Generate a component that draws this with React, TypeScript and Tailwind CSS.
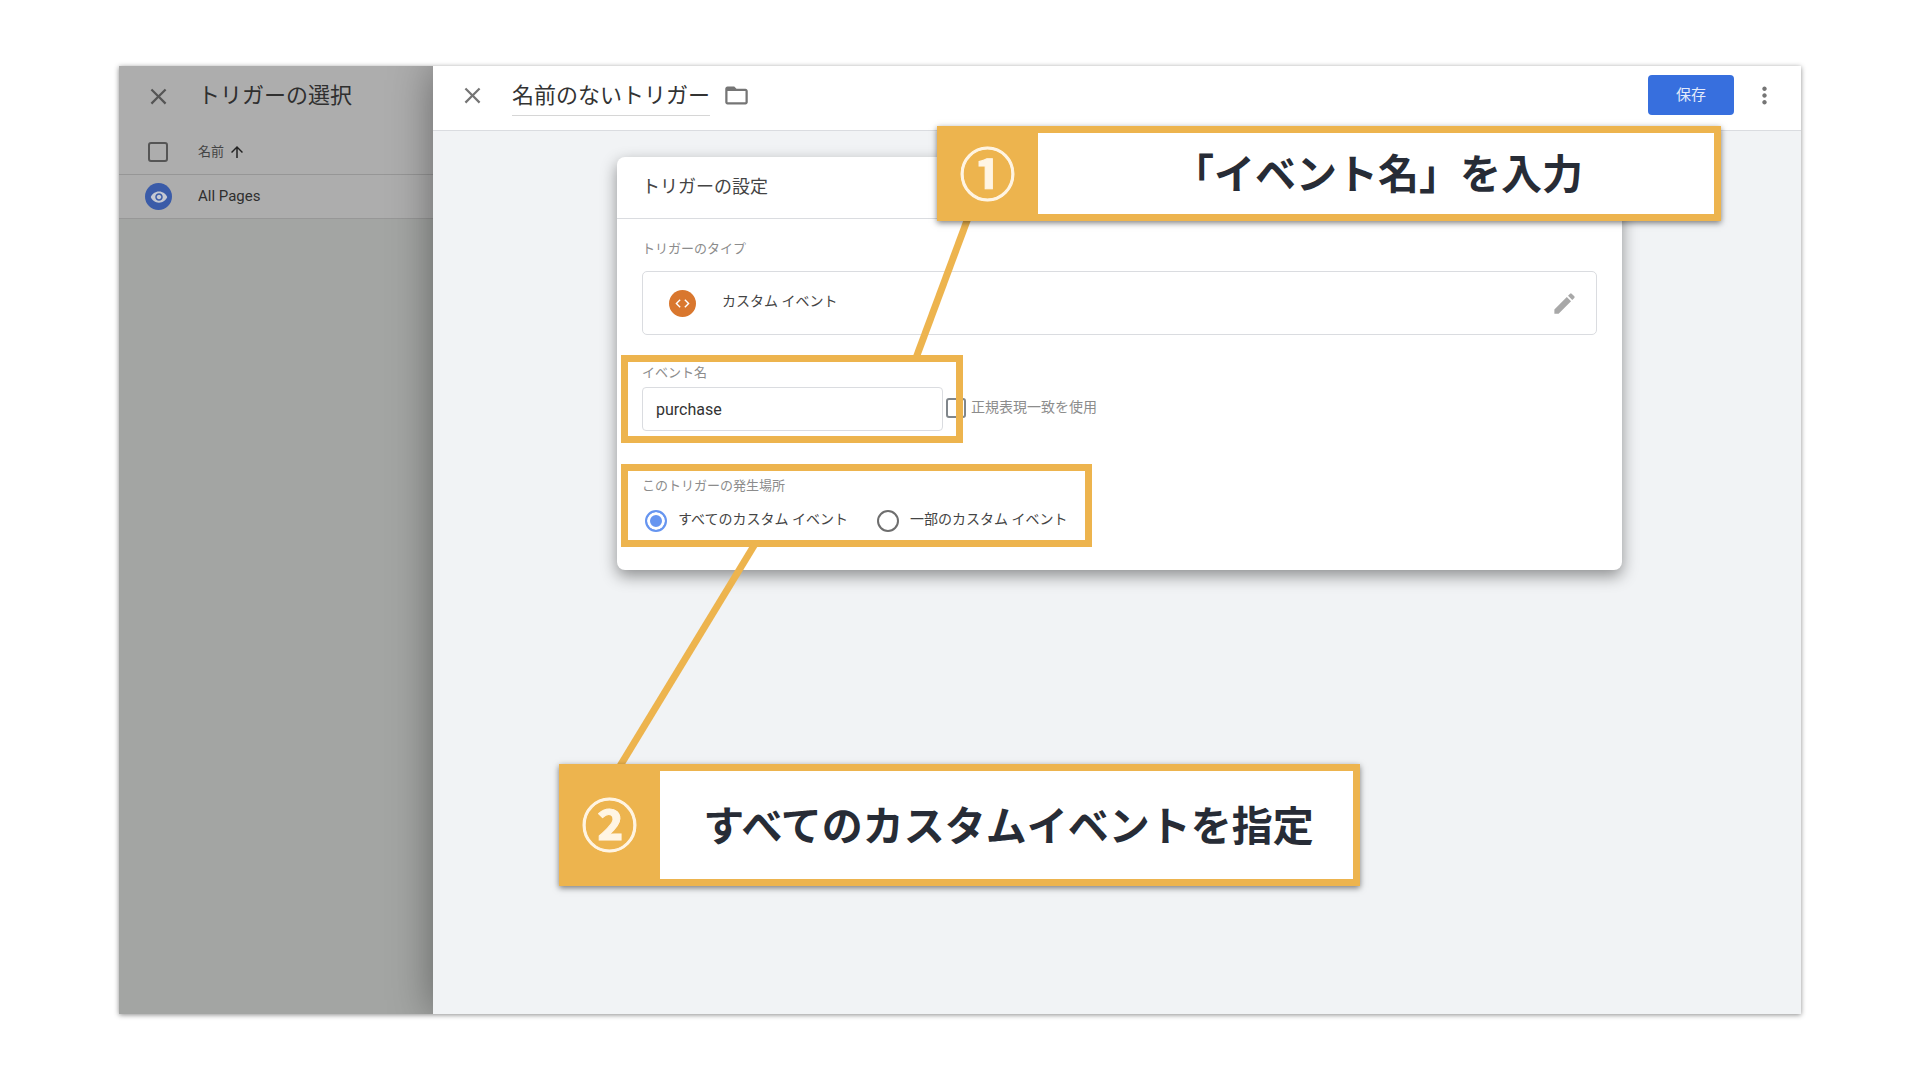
import { useState, type ReactNode } from "react";
import {
  MdArrowUpward,
  MdClose,
  MdCode,
  MdEdit,
  MdFolderOpen,
  MdMoreVert,
  MdVisibility,
} from "react-icons/md";
import { clsx } from "clsx";

const CHECKBOX =
  "size-5 shrink-0 appearance-none rounded-[3px] border-2 checked:bg-[#6695f0]";

function TriggerListPanel() {
  return (
    <aside className="w-[314px] shrink-0 bg-[#a3a5a3] text-[#2f2f2f]">
      <div className="bg-[#adadad]">
        <div className="flex h-16 items-center pb-1 pl-[26px]">
          <button type="button" aria-label="閉じる" className="text-[#555]">
            <MdClose size={27} />
          </button>
          <h2 className="ml-[26px] text-[22px] leading-8">トリガーの選択</h2>
        </div>
        <div className="flex h-[45px] items-center border-b border-[#969696] pl-[29px]">
          <input
            type="checkbox"
            aria-label="すべて選択"
            className={clsx(CHECKBOX, "border-[#555]")}
          />
          <button
            type="button"
            className="ml-[30px] flex items-center gap-1 text-[13px] text-[#444]"
          >
            名前
            <MdArrowUpward size={18} className="text-[#222]" />
          </button>
        </div>
        <div className="flex h-11 items-center border-b border-[#979797] pl-[26px]">
          <span className="flex size-[27px] items-center justify-center rounded-full bg-[#3a5ba8] text-[#c4c8d2]">
            <MdVisibility size={18} />
          </span>
          <a href="#all-pages" className="ml-[26px] text-[15px]">
            All Pages
          </a>
        </div>
      </div>
    </aside>
  );
}

function EditorHeader() {
  const [name, setName] = useState("名前のないトリガー");

  return (
    <header className="flex h-[65px] items-center border-b border-[#dadce0] bg-white pr-[23px] pb-[6px] pl-[26px] text-[#757575]">
      <button type="button" aria-label="閉じる">
        <MdClose size={27} />
      </button>
      <input
        aria-label="トリガー名"
        value={name}
        onChange={(e) => setName(e.target.value)}
        className="ml-[26px] h-[42px] w-[198px] border-b border-[#d6d6d6] pb-1 text-[22px] text-[#333] outline-none"
      />
      <button type="button" aria-label="フォルダ" className="ml-[13px]">
        <MdFolderOpen size={27} />
      </button>
      <button
        type="button"
        className="ml-auto h-10 w-[86px] rounded-[4px] bg-[#376fde] text-[15px] text-[#e3ebfb]"
      >
        保存
      </button>
      <button type="button" aria-label="その他" className="ml-[17px]">
        <MdMoreVert size={27} />
      </button>
    </header>
  );
}

function FieldLabel({ children }: { children: ReactNode }) {
  return <span className="block text-[13px] leading-5 text-[#8c8c8c]">{children}</span>;
}

function FireOption({
  label,
  checked,
  onSelect,
}: {
  label: string;
  checked: boolean;
  onSelect: () => void;
}) {
  return (
    <label className="flex items-center gap-[11px] text-sm leading-5 text-[#444]">
      <input
        type="radio"
        name="fire-on"
        checked={checked}
        onChange={onSelect}
        className="size-[22px] appearance-none rounded-full border-2 border-[#6e6e6e] checked:border-[#6695f0] checked:bg-[#6695f0] checked:shadow-[inset_0_0_0_3px_white]"
      />
      <span className="pb-1">{label}</span>
    </label>
  );
}

function TriggerCard() {
  const [eventName, setEventName] = useState("purchase");
  const [fireOn, setFireOn] = useState("all");

  return (
    <section className="rounded-lg bg-white shadow-[0_6px_16px_rgba(0,0,0,0.42)]">
      <h3 className="flex h-[62px] items-center border-b border-[#dadce0] px-[25px] pb-[2px] text-[18px] text-[#444]">
        トリガーの設定
      </h3>
      <div className="px-[25px] pt-5 pb-[37px]">
        <FieldLabel>トリガーのタイプ</FieldLabel>
        <div className="mt-3 flex h-16 items-center rounded-[5px] border border-[#dadce0] pr-[18px] pl-[26px]">
          <span className="flex size-[27px] items-center justify-center rounded-full bg-[#d9772e] text-white">
            <MdCode size={17} />
          </span>
          <span className="ml-[26px] pb-1 text-sm text-[#444]">カスタム イベント</span>
          <button type="button" aria-label="編集" className="ml-auto text-[#a8a8a8]">
            <MdEdit size={27} />
          </button>
        </div>

        <label htmlFor="event-name" className="mt-7 block">
          <FieldLabel>イベント名</FieldLabel>
        </label>
        <div className="mt-1 flex items-center gap-[3px]">
          <input
            id="event-name"
            value={eventName}
            onChange={(e) => setEventName(e.target.value)}
            className="h-11 w-[301px] rounded-[4px] border border-[#dadce0] px-[13px] text-base text-[#333] outline-none"
          />
          <label className="flex items-center gap-[5px] pb-[2px] text-sm text-[#8c8c8c]">
            <input type="checkbox" className={clsx(CHECKBOX, "border-[#80868b]")} />
            <span className="pb-[2px]">正規表現一致を使用</span>
          </label>
        </div>

        <fieldset className="mt-[45px]">
          <legend>
            <FieldLabel>このトリガーの発生場所</FieldLabel>
          </legend>
          <div className="mt-[13px] flex gap-[29px] pl-[3px]">
            <FireOption
              label="すべてのカスタム イベント"
              checked={fireOn === "all"}
              onSelect={() => setFireOn("all")}
            />
            <FireOption
              label="一部のカスタム イベント"
              checked={fireOn === "some"}
              onSelect={() => setFireOn("some")}
            />
          </div>
        </fieldset>
      </div>
    </section>
  );
}

function Callout({
  mark,
  text,
  className,
}: {
  mark: string;
  text: string;
  className: string;
}) {
  return (
    <div
      className={clsx(
        "absolute flex border-[7px] border-[#edb44e] bg-white shadow-[0_2px_6px_rgba(0,0,0,0.5)]",
        className
      )}
    >
      <span className="flex w-[94px] shrink-0 items-center justify-center bg-[#edb44e] pt-1 pr-[7px] text-[56px] leading-none font-bold text-[#fff5e4] [-webkit-text-stroke:1px_#fff5e4]">
        {mark}
      </span>
      <p className="flex flex-1 items-center justify-center pt-1 pl-1 text-[41px] leading-none font-bold whitespace-nowrap text-[#272c36]">
        {text}
      </p>
    </div>
  );
}

function Annotations() {
  return (
    <div className="pointer-events-none absolute inset-0 z-20">
      <div className="absolute top-[289px] left-[502px] h-[88px] w-[342px] border-[7px] border-[#edb44e]" />
      <div className="absolute top-[398px] left-[502px] h-[83px] w-[471px] border-[7px] border-[#edb44e]" />
      <svg className="absolute inset-0 size-full" stroke="#edb44e" strokeWidth="7" aria-hidden>
        <line x1="849" y1="152" x2="797" y2="292" />
        <line x1="636" y1="478" x2="501" y2="700" />
      </svg>
      <Callout
        mark="①"
        text="「イベント名」を入力"
        className="top-[60px] left-[818px] h-[95px] w-[784px]"
      />
      <Callout
        mark="②"
        text="すべてのカスタムイベントを指定"
        className="top-[698px] left-[440px] h-[122px] w-[801px]"
      />
    </div>
  );
}

export default function App() {
  return (
    <div className="flex min-h-screen bg-white px-[119px] py-[66px] font-[Roboto,'Noto_Sans_CJK_JP',sans-serif]">
      <div className="relative flex flex-1 shadow-[0_1px_5px_rgba(0,0,0,0.45)]">
        <div className="flex flex-1 overflow-hidden">
          <TriggerListPanel />
          <main className="flex-1 bg-[#f1f3f5] shadow-[0_0_40px_rgba(0,0,0,0.4)]">
            <EditorHeader />
            <div className="pt-[26px] pr-[179px] pl-[184px]">
              <TriggerCard />
            </div>
          </main>
        </div>
        <Annotations />
      </div>
    </div>
  );
}
